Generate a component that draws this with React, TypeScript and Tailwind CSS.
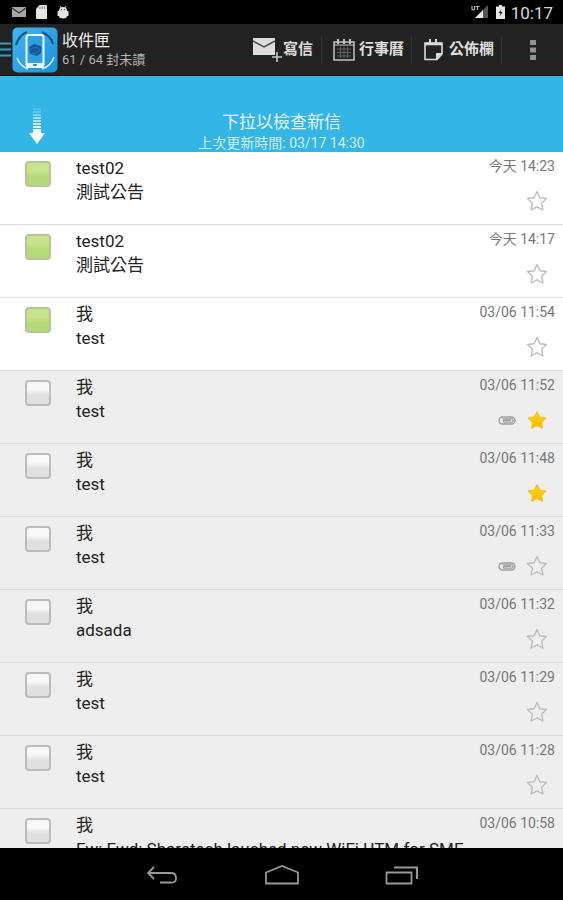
import { useState } from 'react';

interface Mail {
  id: number;
  from: string;
  subject: string;
  time: string;
  unread?: boolean;
  starred?: boolean;
  attachment?: boolean;
}

const initialMails: Mail[] = [
  { id: 1, from: 'test02', subject: '測試公告', time: '今天 14:23', unread: true },
  { id: 2, from: 'test02', subject: '測試公告', time: '今天 14:17', unread: true },
  { id: 3, from: '我', subject: 'test', time: '03/06 11:54', unread: true },
  { id: 4, from: '我', subject: 'test', time: '03/06 11:52', starred: true, attachment: true },
  { id: 5, from: '我', subject: 'test', time: '03/06 11:48', starred: true },
  { id: 6, from: '我', subject: 'test', time: '03/06 11:33', attachment: true },
  { id: 7, from: '我', subject: 'adsada', time: '03/06 11:32' },
  { id: 8, from: '我', subject: 'test', time: '03/06 11:29' },
  { id: 9, from: '我', subject: 'test', time: '03/06 11:28' },
  { id: 10, from: '我', subject: 'Fw: Fwd: Sharetech lauched new WiFi UTM for SME', time: '03/06 10:58' },
];

function StatusBar() {
  return (
    <div className="flex h-6 shrink-0 items-center bg-black pl-3 pr-[10px] text-[#d8d8d8]">
      <div className="flex items-center gap-[10px]">
        <svg className="h-3 w-[14px]" viewBox="0 0 14 12">
          <rect y="1" width="14" height="10" fill="#a8a8a8" />
          <path d="M0 2l7 5 7-5" fill="none" stroke="#333" strokeWidth="1.4" />
        </svg>
        <svg className="h-[14px] w-[11px]" viewBox="0 0 11 14">
          <path d="M3.5 0H10q1 0 1 1v12q0 1-1 1H1q-1 0-1-1V4z" fill="#e4e4e4" />
          <path d="M4 1.5v2.5M6.3 1.5v2.5M8.6 1.5v2.5" stroke="#777" strokeWidth=".9" />
        </svg>
        <svg className="h-[14px] w-3" viewBox="0 0 12 14">
          <path d="M3 1l1.5 2M9 1L7.5 3" stroke="#e4e4e4" strokeWidth="1" />
          <path d="M2 6q0-4 4-4t4 4h1.500v5H10q0 2.500-4 2.500T2 11H.5V6z" fill="#e4e4e4" />
          <circle cx="4.500" cy="4.500" r=".6" fill="#222" />
          <circle cx="7.500" cy="4.500" r=".6" fill="#222" />
        </svg>
      </div>
      <div className="ml-auto flex items-center">
        <svg className="h-[14px] w-[18px]" viewBox="0 0 18 14">
          <path d="M17 0v13H4z" fill="#555" />
          <path d="M12 5v8H4z" fill="#e8e8e8" />
          <path d="M1 1v3q0 1 1.300 1T3.600 4V1M4.500 1.500h4M6.500 1.500V5" fill="none" stroke="#b8b8b8" strokeWidth="1.200" />
        </svg>
        <svg className="ml-[7px] h-[14px] w-[9px]" viewBox="0 0 9 14">
          <path d="M3 0h3v1.500h3V14H0V1.500h3z" fill="#e8e8e8" />
          <path d="M5.500 4L2.500 8h2L3.500 11.500l3.200-4.500h-2z" fill="#222" />
        </svg>
        <span className="ml-[6px] pt-[2px] text-[17px] leading-[22px]">10:17</span>
      </div>
    </div>
  );
}

function AppLogo() {
  return (
    <svg className="h-[46px] w-[46px]" viewBox="0 0 46 46">
      <defs>
        <linearGradient id="logo" x1="0" y1="0" x2="1" y2="1">
          <stop offset="0" stopColor="#43b5ee" />
          <stop offset="1" stopColor="#1b91dc" />
        </linearGradient>
      </defs>
      <rect x=".5" y=".5" width="45" height="45" rx="5" fill="url(#logo)" />
      <path d="M4 18Q7 8 15 5M30 5q9 4 11 12" fill="none" stroke="#12538c" strokeWidth="2.200" />
      <path d="M5 31q3 8 11 11M30 42q9-3 12-12" fill="none" stroke="#cfeeff" strokeWidth="1.600" />
      <rect x="14.500" y="8" width="17" height="32" rx="2.500" fill="#2ba0e5" stroke="#f4fbff" strokeWidth="2" />
      <path d="M14 36h18v5H14z" fill="#f4fbff" />
      <rect x="21" y="37" width="4" height="2" rx="1" fill="#2387c8" />
      <path d="M17 20l5-3 7 2v7l-4 3-7-2z" fill="#135b97" />
      <path d="M18 23q5-5 10 0M19 26q5 2 8-2" fill="none" stroke="#1f76b6" strokeWidth="1" />
    </svg>
  );
}

function ComposeIcon() {
  return (
    <svg className="h-[26px] w-[29px]" viewBox="0 0 29 26">
      <rect x="0" y="1" width="22" height="17" fill="#dcdcdc" />
      <path d="M0 4l11 6 11-6" fill="none" stroke="#4a4a4a" strokeWidth="1.500" />
      <path d="M24 15v10M19 20h10" stroke="#222" strokeWidth="4" />
      <path d="M24 15v10M19 20h10" stroke="#c8c8c8" strokeWidth="1.600" />
    </svg>
  );
}

function CalendarIcon() {
  return (
    <svg className="h-[22px] w-[22px]" viewBox="0 0 22 22" fill="none" stroke="#c4c4c4">
      <path d="M1 3h20v18H1z" strokeWidth="1.500" />
      <path d="M1 6h20" strokeWidth="1" />
      <path d="M5 0v5M11 0v5M17 0v5" strokeWidth="2" />
      <path d="M4 10h14M4 13.500h14M4 17h14M7.500 8v11M11 8v11M14.500 8v11" stroke="#666" strokeWidth=".9" />
    </svg>
  );
}

function BoardIcon() {
  return (
    <svg className="h-[22px] w-[19px]" viewBox="0 0 19 22" fill="none" stroke="#dcdcdc">
      <path d="M1 4h17v11l-5 5.500H1z" strokeWidth="1.600" />
      <path d="M1 5h17" strokeWidth="2.600" />
      <path d="M6 0v5M12 0v5" strokeWidth="2" />
      <path d="M18 14.500h-5.500V20z" fill="#dcdcdc" strokeWidth="1" />
    </svg>
  );
}

function Header() {
  return (
    <header className="flex h-13 shrink-0 items-center border-b border-[#111] bg-[#222]">
      <button className="flex items-center gap-px" aria-label="選單">
        <svg className="h-[15px] w-[11px]" viewBox="0 0 11 15">
          <path d="M0 1.500h11M0 7.500h11M0 13.500h11" stroke="#2f9dc6" strokeWidth="2" />
        </svg>
        <AppLogo />
      </button>
      <div className="ml-1 flex-1 whitespace-nowrap">
        <h1 className="pt-px text-base leading-5 text-[#f0f0f0]">收件匣</h1>
        <p className="text-[13px] leading-[18px] text-[#b4b4b4]">61 / 64 封未讀</p>
      </div>
      <nav className="flex items-center whitespace-nowrap text-[15px] font-bold text-[#dedede]">
        <button className="flex h-7 items-center gap-px border-r border-[#333] pr-2">
          <ComposeIcon />
          寫信
        </button>
        <button className="flex h-7 items-center gap-1 border-r border-[#333] pl-[11px] pr-[7px]">
          <CalendarIcon />
          行事曆
        </button>
        <button className="flex h-7 items-center gap-[6px] border-r border-[#333] pl-3 pr-[7px]">
          <BoardIcon />
          公佈欄
        </button>
        <button className="flex w-[61px] justify-center" aria-label="更多">
          <svg className="h-5 w-[6px]" viewBox="0 0 6 20" fill="#909090">
            <rect width="6" height="5" />
            <rect y="7.500" width="6" height="5" />
            <rect y="15" width="6" height="5" />
          </svg>
        </button>
      </nav>
    </header>
  );
}

function PullToRefresh() {
  return (
    <div className="grid h-19 shrink-0 grid-cols-[74px_1fr_74px] items-end bg-[#33b5e5] text-center">
      <svg className="mb-2 h-9 w-4 justify-self-center" viewBox="0 0 16 36" fill="#f6fbfe">
        <rect x="4" y="0" width="8" height="2" opacity=".15" />
        <rect x="4" y="3" width="8" height="2" opacity=".25" />
        <rect x="4" y="6" width="8" height="2" opacity=".4" />
        <rect x="4" y="9" width="8" height="2" opacity=".55" />
        <rect x="4" y="12" width="8" height="2" opacity=".65" />
        <rect x="4" y="15" width="8" height="2" opacity=".75" />
        <rect x="4" y="18" width="8" height="2" opacity=".9" />
        <path d="M4 21h8v4h4l-8 11-8-11h4z" />
      </svg>
      <div>
        <p className="text-[17px] leading-6 text-[#eaf7fd]">下拉以檢查新信</p>
        <p className="text-sm leading-[18px] text-[#d6effa]">上次更新時間: 03/17 14:30</p>
      </div>
    </div>
  );
}

function Star({ filled }: { filled?: boolean }) {
  return (
    <svg className="h-[22px] w-[22px]" viewBox="0 0 22 22">
      <defs>
        <linearGradient id="gold" x1="0" y1="0" x2="0" y2="1">
          <stop offset="0" stopColor="#ffdc1e" />
          <stop offset="1" stopColor="#f5b400" />
        </linearGradient>
      </defs>
      <path
        d={
          filled
            ? 'M11 3l2.700 5.300 5.800.8-4.200 4.200 1 5.700L11 16.300 5.700 19l1-5.700L2.500 9.100l5.800-.8z'
            : 'M11 1.500l2.900 6.200 6.600.8-4.900 4.700 1.300 6.800L11 16.800 5.100 20l1.300-6.800L1.500 8.500l6.600-.8z'
        }
        fill={filled ? 'url(#gold)' : 'none'}
        stroke={filled ? '#f9c412' : '#bdbdbd'}
        strokeWidth={filled ? '1.5' : '1.4'}
        strokeLinejoin="round"
      />
    </svg>
  );
}

function Clip() {
  return (
    <svg className="h-[9px] w-[18px]" viewBox="0 0 18 9" fill="none" stroke="#9c9c9c">
      <path
        d="M4.500 2.800h9a1.700 1.700 0 0 1 0 3.400H6a1 1 0 0 1 0-1.800h7M14 1H4.500a3.500 3.500 0 0 0 0 7H13.500a3.500 3.500 0 0 0 0-7"
        strokeWidth="1.300"
      />
    </svg>
  );
}

function MailRow({ mail, onStar }: { mail: Mail; onStar: () => void }) {
  return (
    <li
      className={`flex h-[73px] shrink-0 border-b pl-[25px] pr-2 ${
        mail.unread ? 'border-[#dedede] bg-white' : 'border-[#d9d9d9] bg-[#eee]'
      }`}
    >
      <input
        type="checkbox"
        aria-label={`${mail.from} ${mail.subject}`}
        defaultChecked={mail.unread}
        className="mt-[9px] h-[26px] w-[26px] shrink-0 appearance-none rounded-[4px] border-2 border-[#bcbcbc] bg-linear-to-b from-[#f8f8f8] from-35% to-[#e0e0e0] to-60% checked:border-[#b3c59a] checked:from-[#c8e58e] checked:to-[#b7da78]"
      />
      <div className="ml-[25px] min-w-0 flex-1 pt-1 text-[17px] leading-6 text-[#222]">
        <p className="truncate">{mail.from}</p>
        <p className="whitespace-nowrap">{mail.subject}</p>
      </div>
      <div className="flex flex-col items-end pt-[5px]">
        <time className="whitespace-nowrap text-sm leading-[18px] text-[#777]">{mail.time}</time>
        <div className="mt-[15px] flex items-center gap-[10px] pr-[7px]">
          {mail.attachment && <Clip />}
          <button onClick={onStar} aria-label="星號">
            <Star filled={mail.starred} />
          </button>
        </div>
      </div>
    </li>
  );
}

function NavBar() {
  return (
    <nav className="flex h-13 shrink-0 items-center justify-center gap-[86px] bg-black pt-[2px]">
      <button aria-label="返回">
        <svg className="h-5 w-[34px]" viewBox="0 0 34 20" fill="none" stroke="#989898" strokeWidth="1.800">
          <path d="M3 8h23q5 0 5 5t-5 4.500H15M9 2L3 8l6 6" />
        </svg>
      </button>
      <button aria-label="主畫面">
        <svg className="h-5 w-[34px]" viewBox="0 0 34 20" fill="none" stroke="#989898" strokeWidth="1.800">
          <path d="M1 18.500V7.500L17 1l16 6.500v11z" />
        </svg>
      </button>
      <button aria-label="最近使用">
        <svg className="h-5 w-[34px]" viewBox="0 0 34 20" fill="none" stroke="#989898" strokeWidth="1.800">
          <path d="M1.500 7.500h25v11h-25z" />
          <path d="M9 2.500h23V14" strokeWidth="2.200" />
        </svg>
      </button>
    </nav>
  );
}

export default function App() {
  const [mails, setMails] = useState<Mail[]>(initialMails);

  const toggleStar = (id: number) => {
    setMails(mails.map((m) => (m.id === id ? { ...m, starred: !m.starred } : m)));
  };

  return (
    <div className="flex h-screen flex-col overflow-hidden bg-black font-[Roboto,'Noto_Sans_CJK_TC',sans-serif]">
      <StatusBar />
      <Header />
      <PullToRefresh />
      <ul className="flex min-h-0 flex-1 flex-col overflow-hidden bg-[#eee]">
        {mails.map((mail) => (
          <MailRow key={mail.id} mail={mail} onStar={() => toggleStar(mail.id)} />
        ))}
      </ul>
      <NavBar />
    </div>
  );
}
